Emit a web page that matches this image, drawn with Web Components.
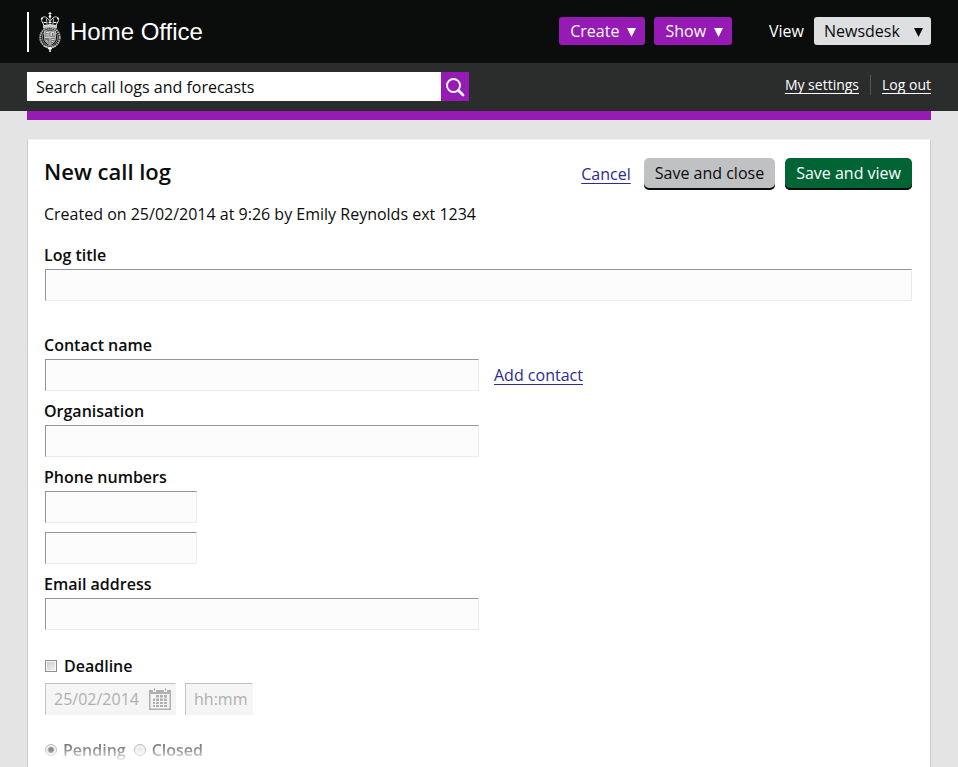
<!DOCTYPE html>
<html lang="en">
<head>
<meta charset="utf-8">
<meta name="viewport" content="width=device-width, initial-scale=1">
<title>New call log</title>
<style>
  html, body { margin: 0; min-height: 100%; }
  body {
    background: #e4e4e4;
    color: #0b0c0c;
    font: 16px/20px "Open Sans", "Noto Sans", sans-serif;
    --purple: #951bb4;
    --link: #2e2a92;
  }
</style>
</head>
<body>
<call-log-app></call-log-app>

<script>
const define = (name, html, setup) => {
  const template = document.createElement('template');
  template.innerHTML = '<style>*,*::before,*::after{box-sizing:border-box}</style>' + html;
  customElements.define(name, class extends HTMLElement {
    constructor() {
      super();
      this.attachShadow({ mode: 'open' }).append(template.content.cloneNode(true));
    }
    connectedCallback() { if (setup) setup(this, this.shadowRoot); }
  });
};

/* Department crest: crown above a shield inside the garter */
define('royal-crest', `
<style>
  :host { display: block; width: 22px; height: 40px; }
  svg { display: block; width: 100%; height: 100%; }
</style>
<svg viewBox="0 0 22 40" fill="none" stroke="#dcdcdc" stroke-width="1" aria-hidden="true">
  <path d="M11 0v4M9.500 1.500h3" stroke="#fff"/>
  <path d="M5 13.500 2.500 8.500C1.500 5.500 5 4 7.500 5.500 9 6.500 10 8 11 9.500c1-1.500 2-3 3.500-4C17 4 20.500 5.500 19.500 8.500L17 13.500"/>
  <path d="M8 12 7.500 6.500M14 12l.5-5.500M11 5v8" stroke="#bbb"/>
  <circle cx="11" cy="4.500" r="1.300" fill="#fff" stroke="none"/>
  <circle cx="3" cy="6.500" r="1" fill="#fff" stroke="none"/>
  <circle cx="19" cy="6.500" r="1" fill="#fff" stroke="none"/>
  <path d="M4.500 10.500h3M9.500 10.500h3M14.500 10.500h3" stroke="#fff"/>
  <path d="M4.500 13.500q6.500-2 13 0v2.500q-6.500-2-13 0z" fill="#ccc" stroke="#eee" stroke-width=".7"/>
  <ellipse cx="11" cy="25.500" rx="9.700" ry="10" stroke="#aaa" stroke-width="2" stroke-dasharray="1.800 .5"/>
  <ellipse cx="11" cy="25.500" rx="7.600" ry="8.300" stroke="#999" stroke-width=".9"/>
  <path d="M5.500 19h11v7.500c0 3-2.500 5-5.500 6.500-3-1.500-5.500-3.500-5.500-6.500z" fill="#777" stroke="#ccc" stroke-width=".8"/>
  <path d="M11 19v13M6 25.500h10" stroke="#ddd" stroke-width=".8"/>
  <path d="M6.500 20.500h3.500M6.500 22.200h3.500M6.500 24h3.500M12.500 27.500h3M12.500 29.500h2M7 28l2 2.500" stroke="#eee" stroke-width=".8"/>
  <path d="M12.500 24v-3.500h2.500V24" stroke="#eee" stroke-width=".8"/>
  <path d="M5 34q3 1.500 6 1.500t6-1.500" stroke="#ccc"/>
  <path d="M9 36.500h4M11 35v5" stroke="#fff" stroke-width="1.500"/>
</svg>`);

define('drop-button', `
<style>
  :host { display: block; }
  button {
    display: flex; align-items: center; gap: 8px; height: 28px; padding: 0 9px 0 11px;
    border: 0; border-radius: 3px; background: var(--purple); color: #fff;
    font: inherit; font-weight: 500; cursor: pointer;
  }
  svg { width: 9px; height: 9px; margin-top: 2px; fill: currentColor; }
</style>
<button type="button" aria-haspopup="true"><slot></slot><svg viewBox="0 0 9 9" aria-hidden="true"><path d="M0 0h9L4.500 9z"/></svg></button>`);

define('view-picker', `
<style>
  :host { display: flex; align-items: center; gap: 10px; color: #fff; }
  label { font-weight: 500; }
  span { display: grid; align-items: center; color: #0b0c0c; }
  select, svg { grid-area: 1 / 1; }
  select {
    appearance: none; width: 117px; height: 28px; padding: 0 28px 0 10px; border: 0;
    border-radius: 3px; background: #dedfe1; color: inherit; font: inherit;
  }
  svg { width: 9px; height: 9px; justify-self: end; margin: 2px 8px 0 0; fill: #0b0c0c; pointer-events: none; }
</style>
<label for="view">View</label>
<span>
  <select id="view"><option>Newsdesk</option></select>
  <svg viewBox="0 0 9 9" aria-hidden="true"><path d="M0 0h9L4.500 9z"/></svg>
</span>`);

define('site-header', `
<style>
  :host { display: flex; align-items: flex-start; height: 63px; padding: 12px 27px 0; background: #0b0c0c; }
  .brand { display: flex; align-items: center; gap: 9px; height: 40px; padding-left: 10px;
    border-left: 2px solid #fff; color: #fff; font: 24px/28px "Liberation Sans", Arial, sans-serif; text-decoration: none; }
  nav { display: flex; align-items: center; gap: 9px; margin: 5px 0 0 auto; }
  view-picker { margin-left: 28px; }
</style>
<a class="brand" href="#"><royal-crest></royal-crest>Home Office</a>
<nav>
  <drop-button>Create</drop-button>
  <drop-button>Show</drop-button>
  <view-picker></view-picker>
</nav>`);

define('search-bar', `
<style>
  :host { display: block; flex: 0 1 442px; }
  form { display: flex; height: 29px; }
  input { flex: 1; min-width: 0; padding: 0 9px; border: 0; border-radius: 0; background: #fff; color: #0b0c0c; font: inherit; }
  input::placeholder { color: #0b0c0c; opacity: 1; }
  button { display: grid; place-items: center; width: 28px; padding: 0; border: 0; background: var(--purple); }
  svg { width: 20px; height: 20px; fill: none; stroke: #fff; }
</style>
<form role="search">
  <input type="search" aria-label="Search call logs and forecasts" placeholder="Search call logs and forecasts">
  <button type="button" aria-label="Search"><svg viewBox="0 0 20 20"><circle cx="8.500" cy="8.500" r="6.500" stroke-width="2"/><path d="m13.500 13.500 4.500 4.500" stroke-width="2.800" stroke-linecap="round"/></svg></button>
</form>`);

define('tool-bar', `
<style>
  :host { display: flex; justify-content: space-between; align-items: flex-start; height: 48px; padding: 9px 27px 0; background: #2b2c2c; }
  nav { display: flex; align-items: center; margin-top: 3px; font-size: 14px; font-weight: 500; }
  a { color: #fff; text-decoration-thickness: 1px; text-underline-offset: 3px; }
  a + a { margin-left: 11px; padding-left: 11px; border-left: 1px solid #555; }
</style>
<search-bar></search-bar>
<nav aria-label="Account"><a href="#">My settings</a><a href="#">Log out</a></nav>`);

define('action-button', `
<style>
  :host { display: block; }
  button { height: 32px; padding: 0 11px 2px; border: 0; border-radius: 5px;
    background: #bfc1c3; color: #0b0c0c; font: inherit; box-shadow: inset 0 -2px #0b0c0c; }
  :host([primary]) button { background: #006435; color: #fff; font-weight: 500; }
</style>
<button type="button"><slot></slot></button>`);

const controlStyle = `
  input {
    display: block; width: 100%; height: 32px; padding: 0 9px; border: 1px solid #ebebeb;
    border-top-color: #959595; border-left-color: #959595; border-radius: 0;
    background: #fcfcfc; color: inherit; font: inherit;
  }`;

/* Labelled text box; type and label come from attributes, the slot sits beside the box */
define('text-field', `
<style>
  ${controlStyle}
  :host { display: block; }
  label { display: block; margin-bottom: 4px; font-weight: 600; }
  .row { display: flex; align-items: center; gap: 15px; margin-left: 1px; }
  :host([size="half"]) input { max-width: 434px; }
  :host([size="small"]) input { max-width: 152px; }
</style>
<label for="box"></label>
<div class="row"><input id="box"><slot></slot></div>`, (host, root) => {
  const label = root.querySelector('label');
  const box = root.querySelector('input');
  box.type = host.getAttribute('type') || 'text';
  if (host.hasAttribute('bare')) {
    label.remove();
    box.setAttribute('aria-label', host.getAttribute('label'));
  } else {
    label.textContent = host.getAttribute('label');
  }
});

define('deadline-field', `
<style>
  ${controlStyle}
  :host { display: block; }
  .toggle { display: flex; align-items: center; gap: 7px; margin: 0 0 7px 1px; font-weight: 600; }
  .toggle input { appearance: none; width: 12px; height: 12px; padding: 0; margin: 0; border: 1px solid #8e8f8f;
    background: linear-gradient(135deg, #c4c7ca, #f6f6f6); box-shadow: inset 0 0 0 1px #f4f4f4; }
  .when { display: flex; gap: 9px; margin-left: 1px; }
  .date { display: grid; align-items: center; width: 131px; }
  .date input, .date svg { grid-area: 1 / 1; }
  .when input { padding: 0 0 0 8px; background: #f5f5f5; border-color: #c2c2c2 #f5f5f5 #f5f5f5 #c2c2c2; color: #b0b0b0; opacity: 1; }
  .when .time { width: 68px; }
  .when input::placeholder { color: #b0b0b0; opacity: 1; }
  svg { width: 22px; height: 22px; justify-self: end; margin-right: 5px; pointer-events: none; }
</style>
<div class="toggle"><input type="checkbox" id="deadline"><label for="deadline">Deadline</label></div>
<div class="when">
  <div class="date">
    <input type="text" aria-label="Deadline date" value="25/02/2014" disabled>
    <svg viewBox="0 0 22 22" fill="#b0b0b0" aria-hidden="true">
      <path fill-rule="evenodd" d="M0 2h4v2h3V2h8v2h3V2h4v20H0zM1.500 6v14.500h19V6z"/>
      <path d="M5 0h1v3H5zM16 0h1v3h-1z"/>
      <path d="M7 7h3v2.500H7zM11 7h3v2.500h-3zM15 7h3v2.500h-3zM4 10.500h2V13H4zM7 10.500h3V13H7zM11 10.500h3V13h-3zM15 10.500h3V13h-3zM4 14h2v2H4zM7 14h3v2H7zM11 14h3v2h-3zM15 14h3v2h-3zM4 17h2v2H4zM7 17h3v2H7zM11 17h3v2h-3zM15 17h3v2h-3z"/>
    </svg>
  </div>
  <input class="time" type="text" aria-label="Deadline time" placeholder="hh:mm" disabled>
</div>`);

define('status-choice', `
<style>
  :host { display: block; }
  fieldset { display: flex; gap: 8px; margin: 0 0 0 1px; padding: 0; border: 0; font-weight: 600;
    mask-image: linear-gradient(rgb(0 0 0 / .65), rgb(0 0 0 / .45) 50%, rgb(0 0 0 / .12) 95%); }
  div { display: flex; align-items: center; gap: 6px; }
  input { appearance: none; width: 12px; height: 12px; margin: 0; border: 1px solid #777; border-radius: 50%;
    background: radial-gradient(circle, #ccc, #fff); }
  input:checked { background: radial-gradient(circle, #000 0 2px, #eee 4px); }
</style>
<fieldset aria-label="Status">
  <div><input type="radio" name="status" id="pending" checked><label for="pending">Pending</label></div>
  <div><input type="radio" name="status" id="closed"><label for="closed">Closed</label></div>
</fieldset>`);

define('page-panel', `
<style>
  :host { display: block; flex: 1; padding: 18px 18px 7px 16px; border: 1px solid #ccc; border-top-color: #f1f1f1; border-bottom: 0; background: #fff; }
  header { display: flex; align-items: center; min-height: 32px; }
  .actions { display: flex; align-items: center; gap: 10px; margin-left: auto; }
</style>
<header><slot name="title"></slot><div class="actions"><slot name="actions"></slot></div></header>
<slot></slot>`);

define('call-log-app', `
<style>
  :host { display: flex; flex-direction: column; min-height: 100vh; }
  main { flex: 1; display: flex; flex-direction: column; margin: 0 27px; }
  .accent { height: 9px; margin-bottom: 19px; background: var(--purple); }
  h1 { margin: 0 0 6px; font-size: 22px; line-height: 26px; font-weight: 600; }
  p { margin: 14px 0 21px; }
  a { color: var(--link); text-decoration-thickness: 1px; text-underline-offset: 3px; }
  .cancel { margin-right: 3px; }
  .title { margin-bottom: 34px; }
  .contact { display: grid; gap: 10px; margin-bottom: 26px; }
  .phones { display: grid; gap: 9px; }
  status-choice { margin-top: 25px; }
</style>
<site-header></site-header>
<tool-bar></tool-bar>
<main>
  <div class="accent"></div>
  <page-panel>
    <h1 slot="title">New call log</h1>
    <a class="cancel" slot="actions" href="#">Cancel</a>
    <action-button slot="actions">Save and close</action-button>
    <action-button slot="actions" primary>Save and view</action-button>
    <p>Created on 25/02/2014 at 9:26 by Emily Reynolds ext 1234</p>
    <text-field class="title" label="Log title"></text-field>
    <div class="contact">
      <text-field label="Contact name" size="half"><a href="#">Add contact</a></text-field>
      <text-field label="Organisation" size="half"></text-field>
      <div class="phones">
        <text-field label="Phone numbers" type="tel" size="small"></text-field>
        <text-field label="Second phone number" type="tel" size="small" bare></text-field>
      </div>
      <text-field label="Email address" type="email" size="half"></text-field>
    </div>
    <deadline-field></deadline-field>
    <status-choice></status-choice>
  </page-panel>
</main>`);
</script>
</body>
</html>
